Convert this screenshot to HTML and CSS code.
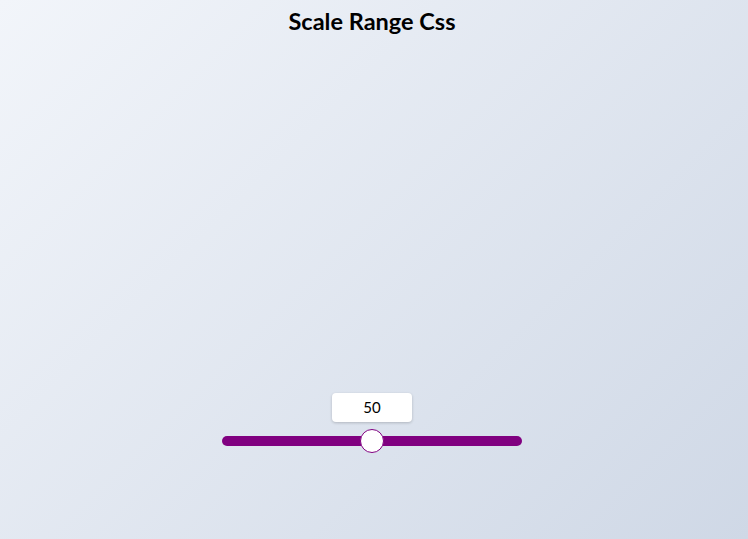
FILE: index.html
```html
<!DOCTYPE html>
<html lang="en">
<head>
<meta charset="utf-8">
<title>Scale Range Css</title>
<link rel="stylesheet" href="styles.css">
</head>
<body>
  <h1 class="title">Scale Range Css</h1>
  <div class="scale">
    <div class="scale-value">50</div>
    <input class="scale-range" type="range" min="0" max="100" value="50">
  </div>
</body>
</html>
```
FILE: styles.css
```css
html, body {
  margin: 0;
  height: 100%;
}
body {
  font-family: Lato, "Open Sans", sans-serif;
  background: linear-gradient(135deg, #f2f5fa 0%, #cfd8e6 100%);
  color: #000;
  overflow: hidden;
  padding-right: 4px;
  box-sizing: border-box;
}
.title {
  margin: 7px 0 0;
  font-size: 23.5px;
  font-weight: 700;
  line-height: 29px;
  text-align: center;
}
.scale {
  margin-top: 357px;
  display: flex;
  flex-direction: column;
  align-items: center;
  gap: 7px;
}
.scale-value {
  width: 80px;
  height: 29px;
  background: #fff;
  border-radius: 4px;
  box-shadow: 0 1px 3px rgba(0,0,0,0.2);
  font-size: 15px;
  line-height: 29px;
  text-align: center;
}
.scale-range {
  -webkit-appearance: none;
  appearance: none;
  width: 300px;
  height: 24px;
  margin: 0;
  background: transparent;
}
.scale-range::-webkit-slider-runnable-track {
  height: 10px;
  background: #800080;
  border-radius: 5px;
}
.scale-range::-webkit-slider-thumb {
  -webkit-appearance: none;
  width: 24px;
  height: 24px;
  box-sizing: border-box;
  border-radius: 50%;
  background: #fff;
  border: 1px solid #800080;
  margin-top: -7px;
}
```
